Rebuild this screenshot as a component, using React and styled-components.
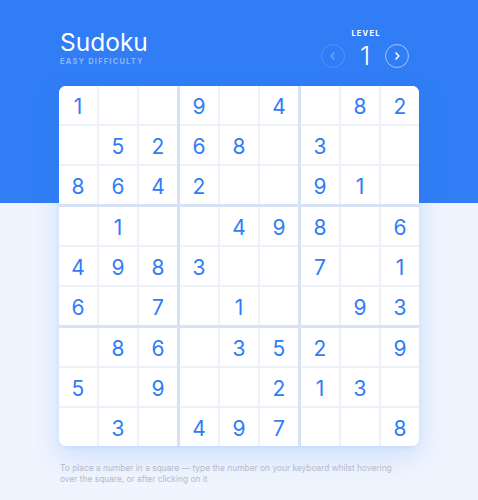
import React from 'react';
import styled, { createGlobalStyle } from 'styled-components';

const GlobalStyle = createGlobalStyle`
  html, body { margin: 0; padding: 0; }
  body {
    font-family: Inter, "Noto Sans", sans-serif;
    background: #eff4fe;
  }
`;

const Page = styled.div`
  min-height: 500px;
  background: linear-gradient(#307df5 0 203px, #eff4fe 203px);
`;

const Container = styled.div`
  width: 360px;
  margin: 0 auto;
  padding-top: 28px;
`;

const Header = styled.header`
  display: flex;
  justify-content: space-between;
  align-items: flex-start;
  height: 58px;
`;

const TitleBlock = styled.div`
  display: flex;
  flex-direction: column;
  padding-left: 1px;
`;

const Title = styled.h1`
  margin: 0;
  font-size: 24.5px;
  line-height: 28px;
  font-weight: 400;
  color: #fff;
`;

const Subtitle = styled.span`
  margin-top: 1px;
  font-size: 7.5px;
  font-weight: 700;
  letter-spacing: 1.2px;
  color: #8cb5fa;
`;

const LevelBlock = styled.div`
  display: flex;
  flex-direction: column;
  align-items: center;
  margin-right: 10px;
`;

const LevelLabel = styled.span`
  font-size: 7.5px;
  font-weight: 700;
  letter-spacing: 1.2px;
  color: #fff;
  margin-top: 1px;
  padding-left: 2px;
`;

const LevelRow = styled.div`
  display: flex;
  align-items: center;
  gap: 12px;
  margin-top: 4px;
`;

const LevelNumber = styled.span`
  font-size: 26px;
  line-height: 28px;
  font-weight: 300;
  color: #fff;
  width: 16px;
  text-align: center;
`;

const RoundButton = styled.button`
  width: 24px;
  height: 24px;
  border-radius: 50%;
  border: 1px solid ${p => (p.$faded ? 'rgba(255,255,255,0.16)' : 'rgba(255,255,255,0.55)')};
  background: transparent;
  display: flex;
  align-items: center;
  justify-content: center;
  padding: 0;
  color: ${p => (p.$faded ? 'rgba(255,255,255,0.3)' : '#fff')};
  cursor: pointer;
`;

const Board = styled.div`
  display: grid;
  grid-template-columns: repeat(3, 1fr);
  gap: 3px;
  background: #d7e2f5;
  border-radius: 7px;
  overflow: hidden;
  box-shadow: 0 10px 26px rgba(48, 125, 245, 0.18), 0 2px 4px rgba(48, 125, 245, 0.08);
`;

const Box = styled.div`
  display: grid;
  grid-template-columns: repeat(3, 38px);
  grid-template-rows: repeat(3, 38px);
  gap: 2px;
  background: #edf1f8;
`;

const Cell = styled.div`
  background: #fff;
  display: flex;
  align-items: center;
  justify-content: center;
  font-size: 21px;
  font-weight: 400;
  color: #307df5;
  padding-top: 2px;
  box-sizing: border-box;
`;

const Hint = styled.p`
  margin: 17px 0 0 1px;
  font-size: 8.4px;
  line-height: 11px;
  color: #b4bbcb;
  white-space: nowrap;
`;

const Chevron = ({ dir }) => (
  <svg width="10" height="10" viewBox="0 0 10 10" fill="none">
    <path
      d={dir === 'left' ? 'M6 2 L3.2 5 L6 8' : 'M4 2 L6.8 5 L4 8'}
      stroke="currentColor"
      strokeWidth="1.6"
      strokeLinecap="round"
      strokeLinejoin="round"
    />
  </svg>
);

const puzzle = [
  '1..9.4.82',
  '.5268.3..',
  '8642..91.',
  '.1..498.6',
  '4983..7.1',
  '6.7.1..93',
  '.86.352.9',
  '5.9..213.',
  '.3.497..8',
];

const boxCells = (b) => {
  const br = Math.floor(b / 3) * 3;
  const bc = (b % 3) * 3;
  const cells = [];
  for (let r = 0; r < 3; r++) {
    for (let c = 0; c < 3; c++) {
      const ch = puzzle[br + r][bc + c];
      cells.push(ch === '.' ? '' : ch);
    }
  }
  return cells;
};

export default function App() {
  return (
    <Page>
      <GlobalStyle />
      <Container>
        <Header>
          <TitleBlock>
            <Title>Sudoku</Title>
            <Subtitle>EASY DIFFICULTY</Subtitle>
          </TitleBlock>
          <LevelBlock>
            <LevelLabel>LEVEL</LevelLabel>
            <LevelRow>
              <RoundButton $faded aria-label="previous level">
                <Chevron dir="left" />
              </RoundButton>
              <LevelNumber>1</LevelNumber>
              <RoundButton aria-label="next level">
                <Chevron dir="right" />
              </RoundButton>
            </LevelRow>
          </LevelBlock>
        </Header>
        <Board>
          {Array.from({ length: 9 }, (_, b) => (
            <Box key={b}>
              {boxCells(b).map((v, i) => (
                <Cell key={i}>{v}</Cell>
              ))}
            </Box>
          ))}
        </Board>
        <Hint>
          To place a number in a square — type the number on your keyboard whilst hovering
          <br />
          over the square, or after clicking on it
        </Hint>
      </Container>
    </Page>
  );
}
